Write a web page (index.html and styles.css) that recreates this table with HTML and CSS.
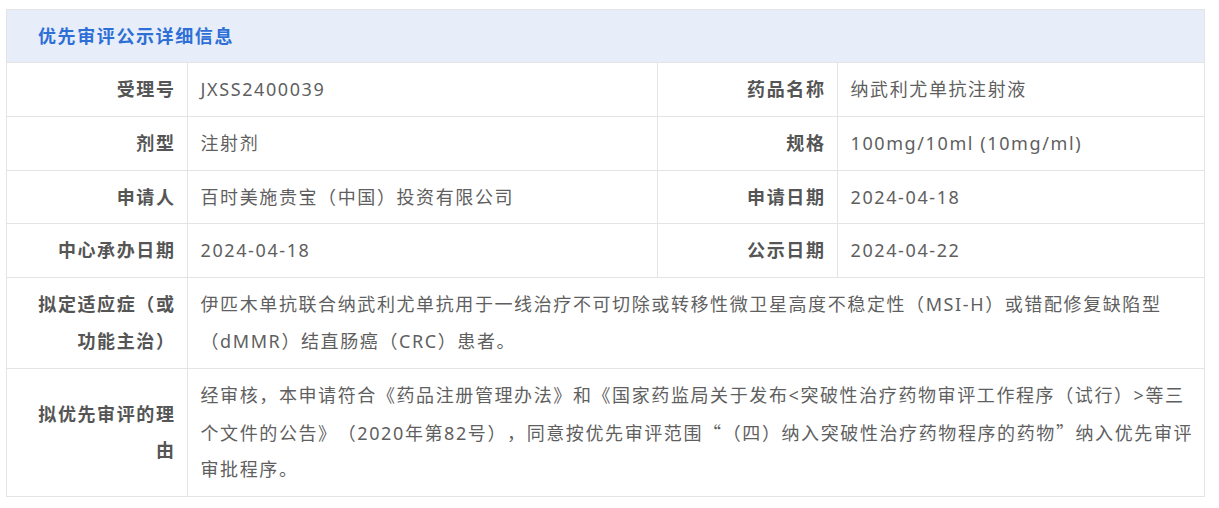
FILE: index.html
```html
<!DOCTYPE html>
<html lang="zh-CN">
<head>
<meta charset="utf-8">
<title>优先审评公示详细信息</title>
<link rel="stylesheet" href="styles.css">
</head>
<body>
<div class="panel">
  <div class="panel-head">优先审评公示详细信息</div>
  <table class="info">
    <colgroup>
      <col class="c-label"><col class="c-value"><col class="c-label"><col class="c-value2">
    </colgroup>
    <tr>
      <th>受理号</th><td>JXSS2400039</td>
      <th>药品名称</th><td>纳武利尤单抗注射液</td>
    </tr>
    <tr>
      <th>剂型</th><td>注射剂</td>
      <th>规格</th><td>100mg/10ml (10mg/ml)</td>
    </tr>
    <tr>
      <th>申请人</th><td>百时美施贵宝（中国）投资有限公司</td>
      <th>申请日期</th><td>2024-04-18</td>
    </tr>
    <tr>
      <th>中心承办日期</th><td>2024-04-18</td>
      <th>公示日期</th><td>2024-04-22</td>
    </tr>
    <tr>
      <th>拟定适应症（或功能主治）</th>
      <td colspan="3">伊匹木单抗联合纳武利尤单抗用于一线治疗不可切除或转移性微卫星高度不稳定性（MSI-H）或错配修复缺陷型（dMMR）结直肠癌（CRC）患者。</td>
    </tr>
    <tr>
      <th>拟优先审评的理由</th>
      <td colspan="3">经审核，本申请符合《药品注册管理办法》和《国家药监局关于发布&lt;突破性治疗药物审评工作程序（试行）&gt;等三个文件的公告》（2020年第82号），同意按优先审评范围<span class="cjk">“</span>（四）纳入突破性治疗药物程序的药物<span class="cjk">”</span>纳入优先审评审批程序。</td>
    </tr>
  </table>
</div>
</body>
</html>
```

FILE: styles.css
```css
html, body {
  margin: 0;
  padding: 0;
  background: #ffffff;
}
body {
  padding: 9px 14px 0 6px;
  font-family: "Noto Sans", "Noto Sans CJK SC", sans-serif;
  color: #555;
  text-spacing-trim: space-all;
}
.panel {
  width: 1199px;
  border: 1px solid #e4e4e4;
  box-sizing: border-box;
}
.panel-head {
  height: 52px;
  line-height: 52px;
  background: #e7eef9;
  color: #2e6fd6;
  font-weight: bold;
  font-size: 18px;
  padding-left: 31px;
  letter-spacing: 1.6px;
  border-bottom: 1px solid #e4e4e4;
}
.info {
  width: 100%;
  border-collapse: collapse;
  table-layout: fixed;
  font-size: 18px;
  line-height: 36.8px;
}
.c-label { width: 180px; }
.c-value { width: 470px; }
.info th, .info td {
  border: 1px solid #e4e4e4;
  padding: 8px 12px 8px 13px;
  vertical-align: middle;
  letter-spacing: 1.6px;
}
.info tr:first-child th, .info tr:first-child td { border-top: none; }
.info tr:last-child th, .info tr:last-child td { border-bottom: none; }
.info tr th:first-child { border-left: none; }
.info tr td:last-child { border-right: none; }
.info th {
  text-align: right;
  font-weight: bold;
  color: #555;
  padding-left: 16px;
  padding-right: 11px;
}
.info td {
  text-align: left;
  color: #5f5f5f;
  font-weight: normal;
  padding-right: 4px;
}
.cjk {
  font-family: "Noto Sans CJK SC", sans-serif;
}
```
